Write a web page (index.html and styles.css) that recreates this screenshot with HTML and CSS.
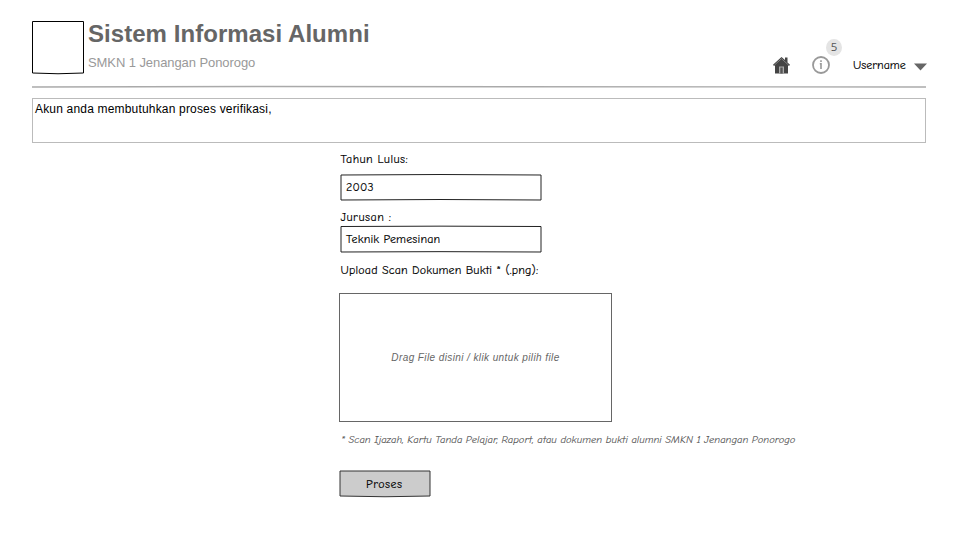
FILE: index.html
```html
<!DOCTYPE html>
<html lang="id">
<head>
<meta charset="utf-8">
<title>Sistem Informasi Alumni</title>
<link rel="stylesheet" href="styles.css">
</head>
<body>
<header class="header">
  <svg class="logo" viewBox="0 0 54 56"><path d="M2.5 1.5H53.5V53Q28 54.5 2.5 53Z" fill="#fff" stroke="#000"/></svg>
  <div class="brand">
    <h1 class="title"><span>Sistem Informasi Alumni</span></h1>
    <p class="school"><span>SMKN 1 Jenangan Ponorogo</span></p>
  </div>
  <nav class="nav">
    <svg class="home" viewBox="0 0 18 18"><path d="M8.500 1 0 8.800 1 10 2 9.200V17.500H15V9.200L16 10 17 8.800 14.500 6.500V1.500H12V4Z" fill="#444"/><path d="M1.500 9 8.500 2.700l7 6.300" fill="none" stroke="#999" stroke-width=".7"/><path d="M6 17.500V10.500h5v7Z" fill="#aaa"/><path d="M7.300 17.500V11.500h2.400v6Z" fill="#555"/></svg>
    <div class="info">
      <svg viewBox="0 0 18 18"><circle cx="9" cy="9" r="8" fill="none" stroke="#999" stroke-width="1.800"/><path d="M9 4.200v1.800M7.800 7.700H9V13" fill="none" stroke="#999" stroke-width="1.600"/></svg>
      <span class="badge">5</span>
    </div>
    <span class="user hand"><span>Username</span></span>
    <svg class="caret" viewBox="0 0 14 8"><path d="M0 .5H13L6.500 7.500Z" fill="#666"/></svg>
  </nav>
</header>
<svg class="rule" viewBox="0 0 894 3"><path d="M0 2 230 1.500 894 2" fill="none" stroke="#aaa" stroke-width="1.400"/></svg>
<div class="notice"><span>Akun anda membutuhkan proses verifikasi,</span></div>
<main class="form hand">
  <div class="label year"><span>Tahun Lulus:</span></div>
  <div class="field"><svg viewBox="0 0 203 28"><path d="M2 2Q100 1 202 2V27Q100 26 2 27Z" fill="#fff" stroke="#222"/></svg><span>2003</span></div>
  <div class="label major"><span>Jurusan :</span></div>
  <div class="field"><svg viewBox="0 0 203 28"><path d="M2 1.500Q100 .8 202 1.500V27Q100 26.300 2 27Z" fill="#fff" stroke="#222"/></svg><span>Teknik Pemesinan</span></div>
  <div class="label upload"><span>Upload Scan Dokumen Bukti * (.png):</span></div>
  <div class="drop"><span>Drag File disini / klik untuk pilih file</span></div>
  <p class="note"><span>* Scan Ijazah, Kartu Tanda Pelajar, Raport, atau dokumen bukti alumni SMKN 1 Jenangan Ponorogo</span></p>
  <div class="button"><svg viewBox="0 0 93 28"><path d="M1 1H91V26Q46 27.500 1 26Z" fill="#ccc" stroke="#333"/></svg><span>Proses</span></div>
</main>
</body>
</html>
```
FILE: styles.css
```css
* { box-sizing: border-box; }
body { margin: 0; padding: 20px 51px 0 32px; height: 542px; background: #fff; font-family: "Liberation Sans", Arial, sans-serif; color: #000; overflow: hidden; }
svg { display: block; }
span { white-space: nowrap; }
.hand { font-family: "Comic Sans MS", "Comic Neue", Lato, sans-serif; font-size: 12px; -webkit-text-stroke: .15px currentColor; }
.header { display: flex; height: 65px; }
.logo { width: 54px; height: 56px; margin-left: -2px; }
.brand { margin-left: 4px; }
.title { margin: 0; font-size: 24px; line-height: 28px; color: #666; letter-spacing: .05px; }
.school { margin: 7px 0 0; font-size: 13px; line-height: 16px; color: #999; letter-spacing: -.08px; }
.nav { display: flex; margin-left: auto; height: 18px; margin-top: 36px; align-items: center; margin-right: -2px; }
.home { width: 18px; height: 18px; }
.info { position: relative; width: 18px; height: 18px; margin-left: 21px; }
.badge { position: absolute; left: 14px; top: -17px; width: 16px; height: 17px; border-radius: 50%; background: #e4e4e4; color: #555; font: 11.500px/15px "Open Sans", sans-serif; text-align: center; }
.user { width: 53px; margin-left: 23px; line-height: 18px; }
.caret { width: 14px; height: 8px; margin-left: 8px; margin-top: 4px; }
.rule { width: 894px; height: 3px; }
.notice { margin-top: 10px; height: 45px; width: 894px; border: 1px solid #bbb; padding: 3px 2px; font-size: 12px; line-height: 15px; letter-spacing: .18px; }
.form { margin-left: 307px; display: flex; flex-direction: column; align-items: flex-start; }
.label { padding-left: 1.500px; line-height: 16px; }
.year { margin-top: 8px; height: 22px; letter-spacing: .42px; }
.major { margin-top: 8px; height: 16px; letter-spacing: .5px; }
.upload { margin-top: 9px; height: 31px; letter-spacing: .17px; }
.field { display: grid; width: 203px; height: 28px; align-items: center; }
.field > *, .button > * { grid-area: 1 / 1; }
.field span { padding-left: 7px; letter-spacing: .17px; }
.drop { width: 273px; height: 129px; border: 1px solid #666; display: flex; align-items: center; justify-content: center; font: italic 10px "Liberation Sans", sans-serif; color: #666; letter-spacing: .4px; -webkit-text-stroke: 0; }
.note { margin: 10px 0 0 2px; height: 38px; font-size: 10.500px; font-style: italic; line-height: 16px; color: #555; letter-spacing: .04px; -webkit-text-stroke: .1px currentColor; }
.button { display: grid; width: 93px; height: 28px; align-items: center; }
.button span { padding-left: 27px; letter-spacing: .5px; }
```
